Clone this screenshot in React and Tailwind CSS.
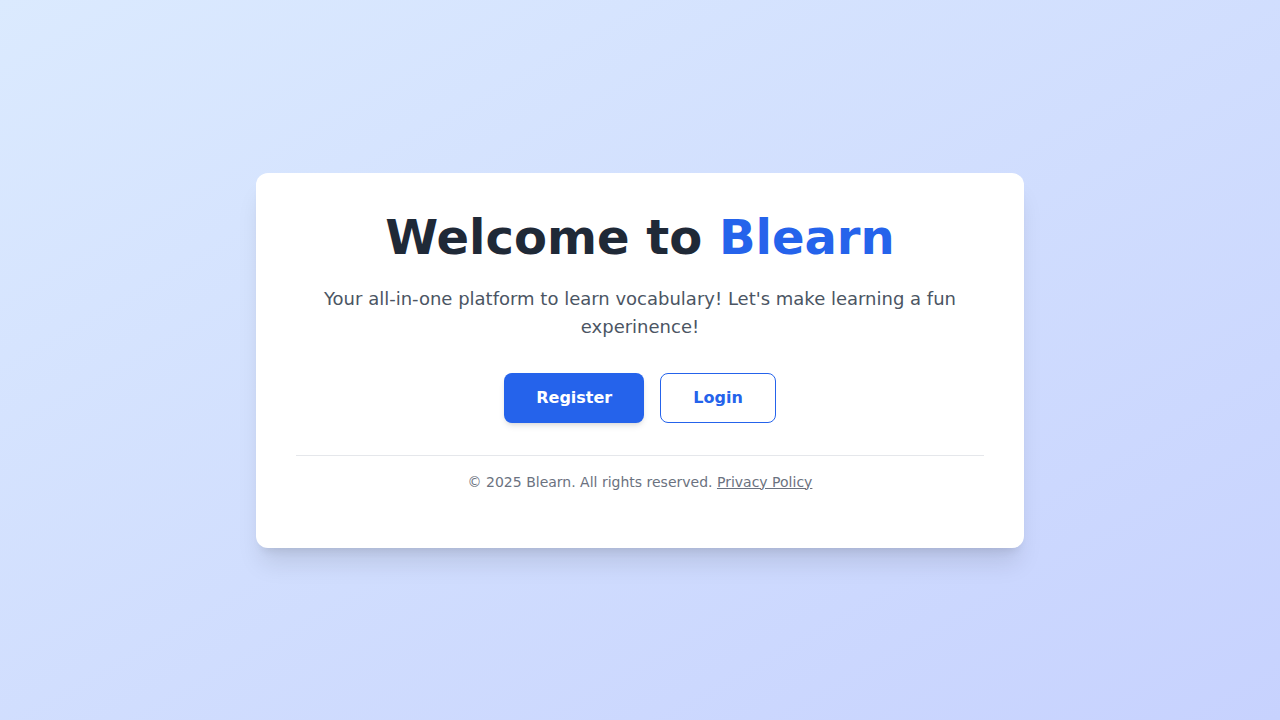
export default function App() {
  return (
    <div className="min-h-screen flex items-center justify-center bg-gradient-to-br from-[#dbeafe] to-[#c7d2fe] font-['DejaVu_Sans',sans-serif] px-4">
      <div className="w-full max-w-3xl bg-white rounded-xl shadow-xl p-10 text-center">
        <h1 className="text-5xl font-bold text-[#1f2937] mb-6">
          Welcome to <span className="text-[#2563eb]">Blearn</span>
        </h1>
        <p className="text-lg text-[#4b5563] mb-8 max-w-2xl mx-auto">
          Your all-in-one platform to learn vocabulary! Let's make learning a fun experinence!
        </p>
        <div className="flex justify-center gap-4">
          <button className="px-8 py-3 rounded-lg bg-[#2563eb] text-white font-bold shadow-md">
            Register
          </button>
          <button className="px-8 py-3 rounded-lg bg-white text-[#2563eb] font-bold border border-[#2563eb]">
            Login
          </button>
        </div>
        <div className="mt-8 border-t border-[#e5e7eb] py-4 text-sm text-[#6b7280]">
          © 2025 Blearn. All rights reserved.{' '}
          <a href="#" className="underline">Privacy Policy</a>
        </div>
      </div>
    </div>
  );
}
